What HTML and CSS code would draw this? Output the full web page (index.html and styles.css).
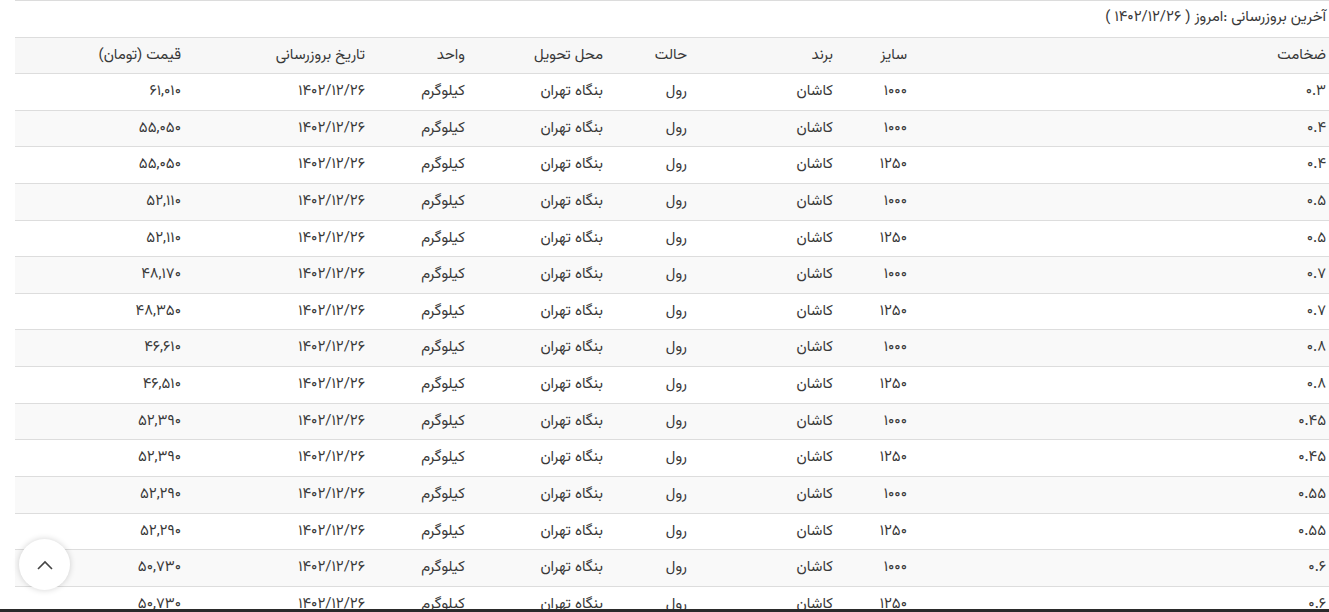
FILE: index.html
```html
<!DOCTYPE html>
<html lang="fa" dir="rtl">
<head>
<meta charset="utf-8">
<title>قیمت ورق</title>
<link rel="stylesheet" href="styles.css">
</head>
<body>
<div class="wrap">
  <div class="caption">آخرین بروزرسانی :امروز ( ۱۴۰۲/۱۲/۲۶ )</div>
  <table class="prices">
    <thead>
      <tr>
        <th class="c-thick">ضخامت</th>
        <th class="c-size">سایز</th>
        <th class="c-brand">برند</th>
        <th class="c-state">حالت</th>
        <th class="c-place">محل تحویل</th>
        <th class="c-unit">واحد</th>
        <th class="c-date">تاریخ بروزرسانی</th>
        <th class="c-price">قیمت (تومان)</th>
      </tr>
    </thead>
    <tbody>
      <tr><td>۰.۳</td><td>۱۰۰۰</td><td>کاشان</td><td>رول</td><td>بنگاه تهران</td><td>کیلوگرم</td><td>۱۴۰۲/۱۲/۲۶</td><td>۶۱,۰۱۰</td></tr>
      <tr><td>۰.۴</td><td>۱۰۰۰</td><td>کاشان</td><td>رول</td><td>بنگاه تهران</td><td>کیلوگرم</td><td>۱۴۰۲/۱۲/۲۶</td><td>۵۵,۰۵۰</td></tr>
      <tr><td>۰.۴</td><td>۱۲۵۰</td><td>کاشان</td><td>رول</td><td>بنگاه تهران</td><td>کیلوگرم</td><td>۱۴۰۲/۱۲/۲۶</td><td>۵۵,۰۵۰</td></tr>
      <tr><td>۰.۵</td><td>۱۰۰۰</td><td>کاشان</td><td>رول</td><td>بنگاه تهران</td><td>کیلوگرم</td><td>۱۴۰۲/۱۲/۲۶</td><td>۵۲,۱۱۰</td></tr>
      <tr><td>۰.۵</td><td>۱۲۵۰</td><td>کاشان</td><td>رول</td><td>بنگاه تهران</td><td>کیلوگرم</td><td>۱۴۰۲/۱۲/۲۶</td><td>۵۲,۱۱۰</td></tr>
      <tr><td>۰.۷</td><td>۱۰۰۰</td><td>کاشان</td><td>رول</td><td>بنگاه تهران</td><td>کیلوگرم</td><td>۱۴۰۲/۱۲/۲۶</td><td>۴۸,۱۷۰</td></tr>
      <tr><td>۰.۷</td><td>۱۲۵۰</td><td>کاشان</td><td>رول</td><td>بنگاه تهران</td><td>کیلوگرم</td><td>۱۴۰۲/۱۲/۲۶</td><td>۴۸,۳۵۰</td></tr>
      <tr><td>۰.۸</td><td>۱۰۰۰</td><td>کاشان</td><td>رول</td><td>بنگاه تهران</td><td>کیلوگرم</td><td>۱۴۰۲/۱۲/۲۶</td><td>۴۶,۶۱۰</td></tr>
      <tr><td>۰.۸</td><td>۱۲۵۰</td><td>کاشان</td><td>رول</td><td>بنگاه تهران</td><td>کیلوگرم</td><td>۱۴۰۲/۱۲/۲۶</td><td>۴۶,۵۱۰</td></tr>
      <tr><td>۰.۴۵</td><td>۱۰۰۰</td><td>کاشان</td><td>رول</td><td>بنگاه تهران</td><td>کیلوگرم</td><td>۱۴۰۲/۱۲/۲۶</td><td>۵۲,۳۹۰</td></tr>
      <tr><td>۰.۴۵</td><td>۱۲۵۰</td><td>کاشان</td><td>رول</td><td>بنگاه تهران</td><td>کیلوگرم</td><td>۱۴۰۲/۱۲/۲۶</td><td>۵۲,۳۹۰</td></tr>
      <tr><td>۰.۵۵</td><td>۱۰۰۰</td><td>کاشان</td><td>رول</td><td>بنگاه تهران</td><td>کیلوگرم</td><td>۱۴۰۲/۱۲/۲۶</td><td>۵۲,۲۹۰</td></tr>
      <tr><td>۰.۵۵</td><td>۱۲۵۰</td><td>کاشان</td><td>رول</td><td>بنگاه تهران</td><td>کیلوگرم</td><td>۱۴۰۲/۱۲/۲۶</td><td>۵۲,۲۹۰</td></tr>
      <tr><td>۰.۶</td><td>۱۰۰۰</td><td>کاشان</td><td>رول</td><td>بنگاه تهران</td><td>کیلوگرم</td><td>۱۴۰۲/۱۲/۲۶</td><td>۵۰,۷۳۰</td></tr>
      <tr><td>۰.۶</td><td>۱۲۵۰</td><td>کاشان</td><td>رول</td><td>بنگاه تهران</td><td>کیلوگرم</td><td>۱۴۰۲/۱۲/۲۶</td><td>۵۰,۷۳۰</td></tr>
    </tbody>
  </table>
</div>
<button class="to-top" aria-label="بالا">
  <svg width="16" height="10" viewBox="0 0 16 10"><path d="M1 9 L8 2 L15 9" fill="none" stroke="#444" stroke-width="1.6"/></svg>
</button>
<div class="taskbar"></div>
</body>
</html>
```

FILE: styles.css
```css
html, body {
  margin: 0;
  padding: 0;
  background: #fff;
  overflow: hidden;
}
body {
  font-family: "Vazirmatn", "DejaVu Sans", sans-serif;
  font-size: 15px;
  color: #383838;
  direction: rtl;
}
.wrap {
  margin-left: 15px;
  border-top: 1px solid #dcdcdc;
}
.caption {
  height: 36px;
  line-height: 34px;
  padding-right: 3px;
  text-align: right;
}
.prices {
  width: 100%;
  border-collapse: collapse;
  table-layout: fixed;
}
.prices th, .prices td {
  text-align: right;
  font-weight: normal;
  padding: 9px 3px 8px 0;
  line-height: 18.64px;
  border-top: 1px solid #dddddd;
  white-space: nowrap;
}
.prices thead th {
  background: #f7f7f7;
  border-bottom: 1px solid #dddddd;
  padding: 8px 3px 8px 0;
  line-height: 19px;
}
.prices tbody tr:nth-child(even) td {
  background: #f9f9f9;
}
.c-thick { width: 416px; }
.c-size { width: 71px; }
.c-brand { width: 143px; }
.c-state { width: 81px; }
.c-place { width: 135px; }
.c-unit { width: 97px; }
.c-date { width: 181px; }
.c-price { width: 166px; }
.to-top {
  position: fixed;
  left: 19px;
  top: 539px;
  width: 51px;
  height: 51px;
  border-radius: 50%;
  border: none;
  background: #fff;
  box-shadow: 0 0 6px rgba(0,0,0,0.18);
  display: flex;
  align-items: center;
  justify-content: center;
  padding: 0;
}
.taskbar {
  position: fixed;
  left: 0;
  right: 0;
  bottom: 0;
  height: 3px;
  background: #2a2a2a;
}
```
